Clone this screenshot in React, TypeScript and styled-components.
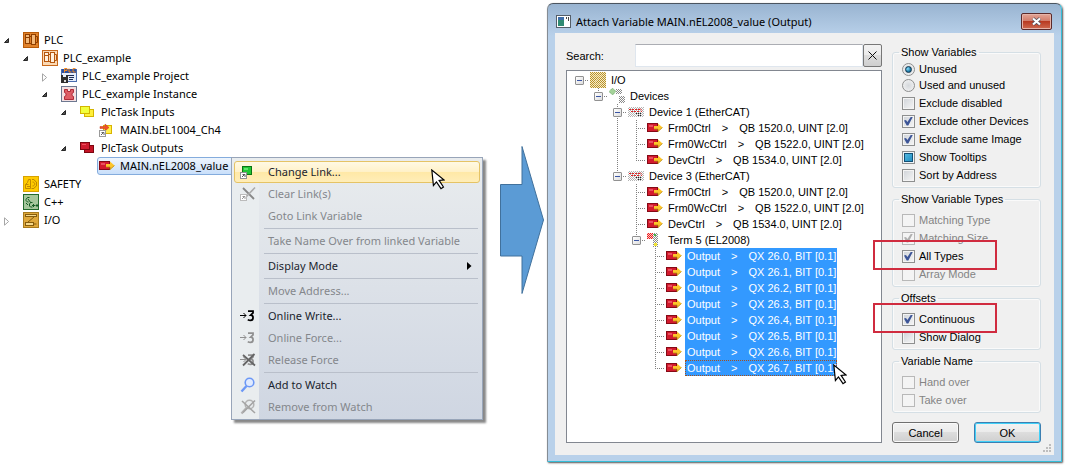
import React from "react";
import styled, { createGlobalStyle, css } from "styled-components";

const GlobalStyle = createGlobalStyle`
  *, *::before, *::after { box-sizing: border-box; }
  body { margin: 0; background: #fff; }
  button, input { font: inherit; color: inherit; margin: 0; }
  button { cursor: default; }
`;

const uiFont = `11px/18px "Noto Sans", "Open Sans", sans-serif`;
const dialogFont = `11px/16px "Liberation Sans", Arial, sans-serif`;

/* ---------- page ---------- */

const Page = styled.main`
  display: grid;
  grid-template-columns: 484px 63px minmax(420px, 1fr);
  padding: 3px 3px 3px 0;
  font: ${uiFont};
  color: #000;
`;

const Explorer = styled.section`
  position: relative;
  padding: 28px 0 0 3px;
`;

/* ---------- solution tree ---------- */

const TreeRow = styled.div<{ $level: number }>`
  display: flex;
  align-items: center;
  height: 18px;
  padding-left: ${(p) => p.$level * 19}px;
`;

const Twisty = styled.button`
  display: flex;
  width: 20px;
  height: 18px;
  padding: 6px 0 0;
  border: 0;
  background: none;
  flex: none;
`;

const NodeIcon = styled.span`
  display: flex;
  flex: none;
`;

const NodeLabel = styled.span`
  padding-left: 5px;
  white-space: nowrap;
`;

const SelectedNode = styled.span`
  display: flex;
  align-items: center;
  width: 137px;
  height: 18px;
  margin-left: -2px;
  padding-left: 1px;
  border: 1px solid #84acdd;
  border-radius: 3px;
  background: linear-gradient(#eef5fd, #c9dffa);
`;

const NodeContent = styled.span`
  display: flex;
  align-items: center;
`;

function OpenArrow() {
  return (
    <svg width="8" height="8" viewBox="0 0 8 8">
      <path d="M5.500 1.500v4H1.500z" fill="#505050" stroke="#262626" strokeWidth="1" />
    </svg>
  );
}

function ClosedArrow() {
  return (
    <svg width="8" height="9" viewBox="0 0 8 9">
      <path d="M1.500 .8v7.400L5.600 4.500z" fill="#fff" stroke="#a6a6a6" />
    </svg>
  );
}

function PlcIcon({ light }: { light?: boolean }) {
  const s = light ? "#b4560f" : "#8f3e00";
  return (
    <svg width="16" height="16" viewBox="0 0 16 16">
      <rect x=".5" y=".5" width="15" height="15" fill={light ? "#fbd9b4" : "#e0822b"} stroke={light ? "#c8691c" : "#b85a08"} />
      <g fill={light ? "#fff1df" : "#f3b878"} stroke={s}>
        <rect x="2.500" y="2.500" width="4" height="3" />
        <rect x="2.500" y="5.500" width="4" height="6" />
        <rect x="8.500" y="2.500" width="4" height="10" />
        <path d="M6.500 4.500h2M12.500 4.500h2v6h-2M8.500 11.500h-2" fill="none" />
      </g>
    </svg>
  );
}

function ProjectIcon() {
  return (
    <svg width="16" height="16" viewBox="0 0 16 16">
      <rect x=".5" y="1.500" width="15" height="12" fill="#e6eefb" stroke="#4a6cae" />
      <rect x="1" y="1" width="14" height="4" fill="#2b50a0" />
      <path d="M3.500 4.500V.500h2.500v2H3.500M8 .500v3.500h2.500M14.500 .600h-2.500v3.400h2.500" fill="none" stroke="#f58a20" />
      <path d="M7 7.500h6M8 9.500h5M8 11.500h4" stroke="#1d2c55" />
      <path d="M0 7h2v2h3V7h2v8H0z" fill="#2e2e2e" />
      <path d="M3 12h2v2H3z" fill="#d8d8d8" />
    </svg>
  );
}

function InstanceIcon() {
  return (
    <svg width="16" height="16" viewBox="0 0 16 16">
      <rect x=".5" y=".5" width="15" height="15" fill="#f3dfe1" stroke="#6d7890" />
      <path d="M3.500 3.500h3v2h3v-2h3v3l-1.500 1v2l1.500 1v3h-9v-3l1.500-1v-2l-1.500-1z" fill="#de5d66" stroke="#b02a38" />
    </svg>
  );
}

function FoldersIcon({ red }: { red?: boolean }) {
  const stroke = red ? "#7c0711" : "#d3b500";
  return (
    <svg width="16" height="16" viewBox="0 0 16 16">
      <rect x="4.500" y="5.500" width="9" height="7" fill={red ? "#c41325" : "#ffef3a"} stroke={stroke} />
      <rect x=".5" y="2.500" width="9" height="7" fill={red ? "#cf1c2f" : "#f1ff3c"} stroke={stroke} />
      {red && <path d="M2 4h4v1H2z" fill="#ee5260" />}
    </svg>
  );
}

function LinkedInputIcon() {
  return (
    <svg width="16" height="16" viewBox="0 0 16 16">
      <rect x="4.500" y="3.500" width="8" height="8" fill="#ffef4a" stroke="#d9b400" />
      <path d="M1 4.500h5V2l4 3.500L6 9V6.500H1z" fill="#f0502a" stroke="#c23a18" strokeWidth=".5" />
      <rect x=".5" y="8.500" width="6" height="6" fill="#fff" stroke="#999" />
      <path d="M2 13l3-3M2.500 10.500H5V13" fill="none" stroke="#666" />
    </svg>
  );
}

function OutputIcon() {
  return (
    <svg width="16" height="16" viewBox="0 0 16 16">
      <rect x=".5" y="3.500" width="10" height="8" fill="#d31a2d" stroke="#860a16" />
      <path d="M2 5h4v2H2z" fill="#e9505f" />
      <path d="M7 6h4V3.500l4.500 4L11 11.500V9H7z" fill="#fdc52b" />
      <path d="M7 9h4v2.500l4.500-4" fill="none" stroke="#b98a10" strokeWidth=".8" />
    </svg>
  );
}

function SafetyIcon() {
  return (
    <svg width="16" height="16" viewBox="0 0 16 16">
      <rect x=".5" y=".5" width="15" height="15" fill="#ffcb00" stroke="#d7a200" />
      <g fill="none" stroke="#c08a00">
        <path d="M7.500 3.500h-2l-1 3-2 2v4h5zM2.500 8.500h3M4 10.500h3" />
        <path d="M9 3.500h2l1 1.500 1.500 1v4L12 11l-1 1.500H8.500M9.500 6c3 0 3 4 0 4" />
      </g>
    </svg>
  );
}

function CppIcon() {
  return (
    <svg width="16" height="16" viewBox="0 0 16 16">
      <rect x=".5" y=".5" width="15" height="15" fill="#a5c79c" stroke="#226a2c" />
      <path
        d="M6.500 3.500h-2l-1.500 2v1l1.500 1.500h1M5 5l3 4M9.500 8.500h-2L6.500 10v2l1 1h2M9 11.500h3M10.500 10v3M12.500 11.500h3M14 10v3M3 9l2 2"
        fill="none"
        stroke="#155a22"
      />
    </svg>
  );
}

function IoIcon() {
  return (
    <svg width="16" height="16" viewBox="0 0 16 16">
      <rect x=".5" y=".5" width="15" height="15" fill="#dfa83b" stroke="#a87a1d" />
      <g fill="#f7d98b" stroke="#855c0c">
        <rect x="2.500" y="2.500" width="11" height="2" />
        <rect x="2.500" y="10.500" width="8" height="3" />
        <path d="M11 5L5 10M10.500 12h3" fill="none" />
      </g>
    </svg>
  );
}

type Node = { level: number; label: string; icon: React.ReactNode; state?: "open" | "closed"; selected?: boolean };

const nodes: Node[] = [
  { level: 0, label: "PLC", icon: <PlcIcon />, state: "open" },
  { level: 1, label: "PLC_example", icon: <PlcIcon light />, state: "open" },
  { level: 2, label: "PLC_example Project", icon: <ProjectIcon />, state: "closed" },
  { level: 2, label: "PLC_example Instance", icon: <InstanceIcon />, state: "open" },
  { level: 3, label: "PlcTask Inputs", icon: <FoldersIcon />, state: "open" },
  { level: 4, label: "MAIN.bEL1004_Ch4", icon: <LinkedInputIcon /> },
  { level: 3, label: "PlcTask Outputs", icon: <FoldersIcon red />, state: "open" },
  { level: 4, label: "MAIN.nEL2008_value", icon: <OutputIcon />, selected: true },
  { level: 0, label: "SAFETY", icon: <SafetyIcon /> },
  { level: 0, label: "C++", icon: <CppIcon /> },
  { level: 0, label: "I/O", icon: <IoIcon />, state: "closed" },
];

function SolutionTree() {
  return (
    <div role="tree" aria-label="Solution">
      {nodes.map((n) => {
        const Content = n.selected ? SelectedNode : NodeContent;
        return (
          <TreeRow key={n.label} $level={n.level} role="treeitem" aria-level={n.level + 1} aria-selected={!!n.selected}>
            <Twisty tabIndex={n.state ? 0 : -1} aria-label={`Toggle ${n.label}`}>
              {n.state === "open" && <OpenArrow />}
              {n.state === "closed" && <ClosedArrow />}
            </Twisty>
            <Content>
              <NodeIcon>{n.icon}</NodeIcon>
              <NodeLabel>{n.label}</NodeLabel>
            </Content>
          </TreeRow>
        );
      })}
    </div>
  );
}

/* ---------- context menu ---------- */

const Menu = styled.div`
  position: absolute;
  top: 154px;
  left: 231px;
  width: 252px;
  padding: 3px 3px 1px 0;
  border: 1px solid #98a5b9;
  background: linear-gradient(90deg, #e9edef 27px, transparent 27px), linear-gradient(#e9ecee, #cfd6e2);
  box-shadow: 3px 3px 2px #888;
`;

const MenuItem = styled.button<{ $hot?: boolean }>`
  display: grid;
  grid-template-columns: 33px 1fr 12px;
  align-items: center;
  width: 246px;
  height: 22px;
  margin-left: 2px;
  padding: 0;
  border: 1px solid transparent;
  border-radius: 3px;
  background: none;
  text-align: left;
  color: #1b1f2e;
  white-space: nowrap;

  &:disabled { color: #84878c; }

  ${(p) =>
    p.$hot &&
    css`
      border-color: #e5c365;
      background: linear-gradient(#fff9e4, #fff1c8 48%, #ffe8a6 50%, #ffedb8);
    `}
`;

const MenuIcon = styled.span`
  display: flex;
  padding-left: 5px;
`;

const Separator = styled.hr`
  height: 1px;
  margin: 1px 1px 1px 32px;
  border: 0;
  background: #b9bfca;
`;

function ChangeLinkIcon() {
  return (
    <svg width="16" height="16" viewBox="0 0 16 16">
      <rect x="2.500" y="2.500" width="9" height="8" fill="#22c535" stroke="#0a7414" />
      <path d="M4 4h4v2H4z" fill="#62e36c" />
      <rect x=".5" y="8.500" width="6" height="6" fill="#fff" stroke="#909090" />
      <path d="M2 13l3-3M2.500 10.500H5V13" fill="none" stroke="#555" />
    </svg>
  );
}

function ClearLinkIcon() {
  return (
    <svg width="16" height="16" viewBox="0 0 16 16">
      <path d="M3 2l11 11" stroke="#888" strokeWidth="1.800" />
      <path d="M15 1.500L6 11" stroke="#aaa" strokeWidth="1.600" />
      <rect x=".5" y="8.500" width="6" height="6" fill="#fff" stroke="#bbb" />
      <path d="M2 13l3-3M2.500 10.500H5V13" fill="none" stroke="#999" />
    </svg>
  );
}

function WriteIcon({ color, crossed }: { color: string; crossed?: boolean }) {
  return (
    <svg width="16" height="16" viewBox="0 0 16 16">
      <path d="M0 7.500h6M3.500 5L6 7.500 3.500 10" fill="none" stroke={color} />
      <path d="M8 3.200h5v1.600L10.800 7c3 0 3 5.400-.2 5.400-1.200 0-2-.2-2.800-.8" fill="none" stroke={color} strokeWidth="1.800" />
      {crossed && <path d="M3 3l12 10.500M14.500 2L3 13.500" stroke="#666" strokeWidth="1.800" />}
    </svg>
  );
}

function WatchIcon({ crossed }: { crossed?: boolean }) {
  const c = crossed ? "#b3b3b3" : "#6c98f6";
  return (
    <svg width="16" height="16" viewBox="0 0 16 16">
      <circle cx="9.500" cy="5.500" r="4.300" fill={crossed ? "none" : "#e0ebff"} stroke={c} strokeWidth="1.600" />
      <path d="M6.500 9L1.500 14.500" stroke={c} strokeWidth="2.400" />
      {crossed && <path d="M2 2l13 12M15 1.500L3 13.500" stroke="#a4a4a4" strokeWidth="1.600" />}
    </svg>
  );
}

function SubmenuArrow() {
  return (
    <svg width="5" height="8" viewBox="0 0 5 8">
      <path d="M0 0l4.500 4L0 8z" fill="#000" />
    </svg>
  );
}

type Entry = { label: string; icon?: React.ReactNode; off?: boolean; hot?: boolean; sub?: boolean } | null;

const entries: Entry[] = [
  { label: "Change Link...", icon: <ChangeLinkIcon />, hot: true },
  { label: "Clear Link(s)", icon: <ClearLinkIcon />, off: true },
  { label: "Goto Link Variable", off: true },
  null,
  { label: "Take Name Over from linked Variable", off: true },
  null,
  { label: "Display Mode", sub: true },
  null,
  { label: "Move Address...", off: true },
  null,
  { label: "Online Write...", icon: <WriteIcon color="#000" /> },
  { label: "Online Force...", icon: <WriteIcon color="#909090" />, off: true },
  { label: "Release Force", icon: <WriteIcon color="#909090" crossed />, off: true },
  null,
  { label: "Add to Watch", icon: <WatchIcon /> },
  { label: "Remove from Watch", icon: <WatchIcon crossed />, off: true },
];

const PointerSpot = styled.span<{ $x: number; $y: number }>`
  position: absolute;
  left: ${(p) => p.$x}px;
  top: ${(p) => p.$y}px;
  display: flex;
  z-index: 2;
`;

function Pointer({ x, y }: { x: number; y: number }) {
  return (
    <PointerSpot $x={x} $y={y}>
      <svg width="14" height="23" viewBox="0 0 14 23">
        <path d="M.8 1v15.500l3.400-3.200 3.800 7.200 2.600-1.400-3.600-7h4.800z" fill="#fff" stroke="#000" strokeWidth="1.200" transform="rotate(-6 1 1)" />
      </svg>
    </PointerSpot>
  );
}

function ContextMenu() {
  return (
    <Menu role="menu">
      {entries.map((e, i) =>
        e === null ? (
          <Separator key={i} />
        ) : (
          <MenuItem key={e.label} role="menuitem" $hot={e.hot} disabled={e.off}>
            <MenuIcon>{e.icon}</MenuIcon>
            <span>{e.label}</span>
            {e.sub && <SubmenuArrow />}
          </MenuItem>
        )
      )}
      <Pointer x={199} y={11} />
    </Menu>
  );
}

/* ---------- arrow between the two steps ---------- */

const StepArrow = styled.div`
  display: flex;
  justify-content: flex-end;
  align-items: flex-start;
  padding: 142px 2px 0 0;
`;

/* ---------- dialog ---------- */

const Dialog = styled.section`
  display: flex;
  flex-direction: column;
  padding: 0 7px 6px;
  border: 1px solid #35bdd8;
  border-top-color: #4b5560;
  border-left-color: #858c94;
  border-radius: 6px 6px 1px 1px;
  background: linear-gradient(#99b4d1, #b9d1ea 32px);
  box-shadow: 1px 1px 2px #555;
`;

const TitleBar = styled.header`
  display: flex;
  align-items: center;
  gap: 5px;
  height: 29px;
  padding: 6px 2px 0 1px;
  white-space: nowrap;
`;

const Title = styled.h1`
  flex: 1;
  margin: 0;
  font: ${uiFont};
`;

const CloseButton = styled.button`
  display: grid;
  place-items: center;
  width: 31px;
  height: 17px;
  padding: 0;
  border: 1px solid #5b2a2a;
  border-radius: 2px;
  background: linear-gradient(#e3a596, #d27c6a 46%, #b83a22 50%, #cf6a50);
  box-shadow: inset 0 0 0 1px #e6b3a8;
`;

const Client = styled.div`
  position: relative;
  display: grid;
  grid-template-columns: minmax(0, 1fr) 149px;
  column-gap: 10px;
  padding: 11px 13px 12px 11px;
  background: #f0f0f0;
  font: ${dialogFont};
`;

const Browser = styled.div`
  display: flex;
  flex-direction: column;
  gap: 3px;
`;

const SearchBar = styled.div`
  display: grid;
  grid-template-columns: 69px 1fr 19px;
  align-items: center;
  height: 23px;
`;

const SearchInput = styled.input`
  width: 100%;
  height: 23px;
  padding: 0 4px;
  border: 1px solid #dfe6ee;
  border-top-color: #abadb3;
  background: #fff;
  outline: none;
`;

const ClearButton = styled.button`
  display: grid;
  place-items: center;
  height: 23px;
  padding: 0;
  border: 1px solid #777;
  border-radius: 2px;
  background: linear-gradient(#f2f2f2, #ebebeb 48%, #dddddd 50%, #cfcfcf);
`;

const ListBox = styled.div`
  flex: 1;
  padding: 1px 4px;
  border: 1px solid #828790;
  background: #fff;
`;

const IoRow = styled.div`
  display: flex;
  align-items: center;
  height: 16px;
  white-space: nowrap;
`;

type GuideKind = " " | "|" | "+" | "L" | "-";

const dotsV = "repeating-linear-gradient(to bottom, #808080 0 1px, transparent 1px 2px)";
const dotsH = "repeating-linear-gradient(to right, #808080 0 1px, transparent 1px 2px)";

const Guide = styled.span<{ $kind: GuideKind }>`
  display: grid;
  align-items: center;
  flex: none;
  width: 19px;
  height: 16px;
  padding-left: 4px;
  background-repeat: no-repeat;
  ${(p) => p.$kind === "|" && css`background-image: ${dotsV}; background-size: 1px 16px; background-position: 8px 0;`}
  ${(p) => p.$kind === "+" && css`background-image: ${dotsV}, ${dotsH}; background-size: 1px 16px, 10px 1px; background-position: 8px 0, 8px 8px;`}
  ${(p) => p.$kind === "L" && css`background-image: ${dotsV}, ${dotsH}; background-size: 1px 8px, 10px 1px; background-position: 8px 0, 8px 8px;`}
  ${(p) => p.$kind === "-" && css`background-image: ${dotsH}; background-size: 10px 1px; background-position: 8px 8px;`}
`;

const Expander = styled.button`
  display: grid;
  place-items: center;
  width: 9px;
  height: 9px;
  padding: 0;
  border: 1px solid #919191;
  border-radius: 1px;
  background: linear-gradient(135deg, #fff, #ddd);

  &::before {
    content: "";
    width: 5px;
    height: 1px;
    background: #3a55a4;
  }
`;

const IoText = styled.span<{ $selected?: boolean; $focus?: boolean }>`
  display: flex;
  gap: 11px;
  height: 16px;
  margin-left: 3px;
  padding: 0 1px 0 2px;
  ${(p) =>
    p.$selected &&
    css`
      color: #fff;
      background: #3399ff;
    `}
  ${(p) => p.$focus && css`outline: 1px dotted #a4511c; outline-offset: -1px;`}
`;

function Hatch({ id, color }: { id: string; color: string }) {
  return (
    <pattern id={id} width="2" height="2" patternUnits="userSpaceOnUse">
      <path d="M0 0h1v1H0zM1 1h1v1H1z" fill={color} />
    </pattern>
  );
}

function HatchedRootIcon() {
  return (
    <svg width="16" height="16" viewBox="0 0 16 16">
      <defs><Hatch id="h-root" color="#b8912a" /></defs>
      <rect width="16" height="16" fill="#f6ecc8" />
      <rect width="16" height="16" fill="url(#h-root)" />
      <path d="M3 4h9M4 12h8M10 6l-5 4" stroke="#f6e7b8" opacity=".6" />
    </svg>
  );
}

function DevicesIcon() {
  return (
    <svg width="16" height="16" viewBox="0 0 16 16">
      <defs><Hatch id="h-dev" color="#8a8a8a" /></defs>
      <path d="M0 3.500L3.500 0 7 3.500 3.500 7z" fill="#a5d39a" stroke="#4b8f46" strokeWidth=".8" strokeDasharray="1 1" />
      <path d="M7 1h6v5H7zM10 8h6v7h-6z" fill="url(#h-dev)" />
    </svg>
  );
}

function DeviceIcon() {
  return (
    <svg width="16" height="16" viewBox="0 0 16 16">
      <defs><Hatch id="h-device" color="#b4b4b4" /></defs>
      <rect y="3" width="16" height="10" fill="url(#h-device)" />
      <path d="M1 5.500h11M12 4.500l2 2-1 1.500M3 7.500h9" fill="none" stroke="#e02020" strokeDasharray="2 1" />
      <path d="M8 9.500h6M10 11.500h3" fill="none" stroke="#222" strokeDasharray="1 1" />
    </svg>
  );
}

function TerminalIcon() {
  return (
    <svg width="16" height="16" viewBox="0 0 16 16">
      <defs><Hatch id="h-red" color="#ee1c1c" /><Hatch id="h-term" color="#8a8a8a" /></defs>
      <path d="M0 1h6v6H0z" fill="#fbc9c9" />
      <path d="M0 1h6v6H0z" fill="url(#h-red)" />
      <path d="M6 1h5v14H6z" fill="url(#h-term)" />
      <path d="M7 2h2v2H7z" fill="#4bb34b" />
      <path d="M7 11h3v3H7z" fill="#f3e638" />
    </svg>
  );
}

type IoNode = {
  guides: string;
  icon: React.ReactNode;
  label: string;
  address?: string;
  open?: boolean;
  selected?: boolean;
  focus?: boolean;
};

const frameVars: [string, string][] = [
  ["Frm0Ctrl", "QB 1520.0, UINT [2.0]"],
  ["Frm0WcCtrl", "QB 1522.0, UINT [2.0]"],
  ["DevCtrl", "QB 1534.0, UINT [2.0]"],
];

const ioNodes: IoNode[] = [
  { guides: "-", icon: <HatchedRootIcon />, label: "I/O", open: true },
  { guides: " L", icon: <DevicesIcon />, label: "Devices", open: true },
  { guides: "  +", icon: <DeviceIcon />, label: "Device 1 (EtherCAT)", open: true },
  ...frameVars.map(([label, address], i) => ({ guides: i === 2 ? "  |L" : "  |+", icon: <OutputIcon />, label, address })),
  { guides: "  L", icon: <DeviceIcon />, label: "Device 3 (EtherCAT)", open: true },
  ...frameVars.map(([label, address]) => ({ guides: "   +", icon: <OutputIcon />, label, address })),
  { guides: "   L", icon: <TerminalIcon />, label: "Term 5 (EL2008)", open: true },
  ...Array.from({ length: 8 }, (_, i) => ({
    guides: i === 7 ? "    L" : "    +",
    icon: <OutputIcon />,
    label: "Output",
    address: `QX 26.${i}, BIT [0.1]`,
    selected: true,
    focus: i === 7,
  })),
];

const FocusedRow = styled(IoRow)`
  position: relative;
`;

function IoTree() {
  return (
    <ListBox role="tree" aria-label="Variables" aria-multiselectable>
      {ioNodes.map((n, i) => {
        const Row = n.focus ? FocusedRow : IoRow;
        return (
          <Row key={i} role="treeitem" aria-level={n.guides.length} aria-selected={!!n.selected}>
            {n.guides.split("").map((g, k) => (
              <Guide key={k} $kind={g as GuideKind}>
                {n.open && k === n.guides.length - 1 && <Expander aria-label={`Collapse ${n.label}`} />}
              </Guide>
            ))}
            <NodeIcon>{n.icon}</NodeIcon>
            <IoText $selected={n.selected} $focus={n.focus}>
              <span>{n.label}</span>
              {n.address && <span>&gt;</span>}
              {n.address && <span>{n.address}</span>}
            </IoText>
            {n.focus && <Pointer x={262} y={4} />}
          </Row>
        );
      })}
    </ListBox>
  );
}

/* ---------- option groups ---------- */

const Side = styled.div`
  display: flex;
  flex-direction: column;
`;

const Group = styled.fieldset<{ $lead: number }>`
  min-width: 0;
  margin: 0 0 3px;
  padding: ${(p) => p.$lead}px 9px 3px;
  border: 1px solid #d5dfe5;
  border-radius: 3px;
  box-shadow: inset 0 0 0 1px #fafafa;
`;

const Legend = styled.legend`
  height: 16px;
  margin-left: -3px;
  padding: 0 2px;
`;

const RadioSet = styled.div`
  padding-bottom: 1px;
`;

const Option = styled.label<{ $off?: boolean; $short?: boolean }>`
  position: relative;
  display: flex;
  align-items: center;
  gap: 4px;
  height: ${(p) => (p.$short ? 16 : 18)}px;
  color: ${(p) => (p.$off ? "#848484" : "#000")};
  white-space: nowrap;
`;

const Check = styled.input`
  appearance: none;
  display: grid;
  place-items: center;
  flex: none;
  width: 13px;
  height: 13px;
  border: 1px solid #8e8f8f;
  background: linear-gradient(135deg, #cfd3d8, #f6f6f6);
  box-shadow: inset 0 0 0 1px #f4f4f4;

  &:checked::after {
    content: "";
    width: 9px;
    height: 9px;
    background: #3d5597;
    clip-path: polygon(0 45%, 22% 38%, 38% 62%, 78% 0, 100% 0, 48% 100%, 30% 100%);
  }

  &:indeterminate {
    background: linear-gradient(135deg, #5fc4ea, #1583b8);
    border-color: #8e8f8f;
    box-shadow: inset 0 0 0 1px #eef4f8, inset 0 0 0 2px #134f74;
  }

  &:disabled {
    border-color: #b8b8b8;
    background: #f4f4f4;
  }

  &:disabled:checked::after { background: #b0b0b0; }
`;

const Radio = styled.input`
  appearance: none;
  display: grid;
  place-items: center;
  flex: none;
  width: 13px;
  height: 13px;
  border: 1px solid #8e8f8f;
  border-radius: 50%;
  background: radial-gradient(#d5d8dc, #f6f6f6);

  &:checked::after {
    content: "";
    width: 7px;
    height: 7px;
    border: 1px solid #12354d;
    border-radius: 50%;
    background: radial-gradient(circle at 35% 35%, #8be0ff, #14709e 65%);
  }
`;

const Marker = styled.span`
  position: absolute;
  top: -7px;
  left: -29px;
  width: 124px;
  height: 30px;
  border: 2px solid #d02b3f;
  pointer-events: none;
  z-index: 1;
`;

type OptionProps = { label: string; checked?: boolean; mixed?: boolean; off?: boolean; marked?: boolean };

function CheckOption({ label, checked, mixed, off, marked }: OptionProps) {
  return (
    <Option $off={off}>
      <Check
        type="checkbox"
        defaultChecked={checked}
        disabled={off}
        ref={(el: HTMLInputElement | null) => {
          if (el && mixed) el.indeterminate = true;
        }}
      />
      {label}
      {marked && <Marker />}
    </Option>
  );
}

const ButtonRow = styled.div`
  display: grid;
  grid-template-columns: 67px 67px;
  justify-content: space-between;
  padding-top: 6px;
`;

const PushButton = styled.button<{ $primary?: boolean }>`
  height: 21px;
  padding: 0;
  border: 1px solid ${(p) => (p.$primary ? "#3c7fb1" : "#707070")};
  border-radius: 3px;
  background: linear-gradient(#f2f2f2, #ebebeb 48%, #dddddd 50%, #cfcfcf);
  box-shadow: inset 0 0 0 1px ${(p) => (p.$primary ? "#40d0f8" : "#fafafa")};
`;

const Grip = styled.span`
  position: absolute;
  right: 2px;
  bottom: 2px;
  display: flex;
`;

function AttachDialog() {
  return (
    <Dialog role="dialog" aria-labelledby="dialog-title">
      <TitleBar>
        <svg width="15" height="13" viewBox="0 0 15 13">
          <rect x=".5" y=".5" width="14" height="12" fill="#fff" stroke="#555e68" />
          <rect x="2" y="2" width="6" height="9" fill="#2f8a72" />
          <path d="M2 2h6v3H2z" fill="#3d6da8" />
          <path d="M10 2h1v2h-1zM12 2h1v4h-1z" fill="#444" />
        </svg>
        <Title id="dialog-title">Attach Variable MAIN.nEL2008_value (Output)</Title>
        <CloseButton aria-label="Close">
          <svg width="11" height="9" viewBox="0 0 11 9">
            <path d="M2 1.500l7 6M9 1.500l-7 6" stroke="#4a4f5c" strokeWidth="3.600" />
            <path d="M2 1.500l7 6M9 1.500l-7 6" stroke="#fff" strokeWidth="2.200" />
          </svg>
        </CloseButton>
      </TitleBar>
      <Client>
        <Browser>
          <SearchBar>
            <label htmlFor="search">Search:</label>
            <SearchInput id="search" type="text" />
            <ClearButton aria-label="Clear search">
              <svg width="9" height="9" viewBox="0 0 9 9">
                <path d="M.5 .5l8 8M8.500 .5l-8 8" stroke="#111" />
              </svg>
            </ClearButton>
          </SearchBar>
          <IoTree />
        </Browser>
        <Side>
          <Group $lead={1}>
            <Legend>Show Variables</Legend>
            <RadioSet>
              <Option $short>
                <Radio type="radio" name="usage" defaultChecked />
                Unused
              </Option>
              <Option $short>
                <Radio type="radio" name="usage" />
                Used and unused
              </Option>
            </RadioSet>
            <CheckOption label="Exclude disabled" />
            <CheckOption label="Exclude other Devices" checked />
            <CheckOption label="Exclude same Image" checked />
            <CheckOption label="Show Tooltips" mixed />
            <CheckOption label="Sort by Address" />
          </Group>
          <Group $lead={4}>
            <Legend>Show Variable Types</Legend>
            <CheckOption label="Matching Type" off />
            <CheckOption label="Matching Size" checked off />
            <CheckOption label="All Types" checked marked />
            <CheckOption label="Array Mode" off />
          </Group>
          <Group $lead={4}>
            <Legend>Offsets</Legend>
            <CheckOption label="Continuous" checked marked />
            <CheckOption label="Show Dialog" />
          </Group>
          <Group $lead={4}>
            <Legend>Variable Name</Legend>
            <CheckOption label="Hand over" off />
            <CheckOption label="Take over" off />
          </Group>
          <ButtonRow>
            <PushButton>Cancel</PushButton>
            <PushButton $primary>OK</PushButton>
          </ButtonRow>
        </Side>
        <Grip>
          <svg width="9" height="9" viewBox="0 0 9 9">
            <path d="M6 0h2v2H6zM3 3h2v2H3zM6 3h2v2H6zM0 6h2v2H0zM3 6h2v2H3zM6 6h2v2H6z" fill="#bdbdbd" />
          </svg>
        </Grip>
      </Client>
    </Dialog>
  );
}

export default function App() {
  return (
    <>
      <GlobalStyle />
      <Page>
        <Explorer>
          <SolutionTree />
          <ContextMenu />
        </Explorer>
        <StepArrow>
          <svg width="46" height="150" viewBox="0 0 46 150">
            <path d="M1.500 39.500H23V1.500L44.500 75 23 148.500v-37.500H1.500z" fill="#5b9bd5" stroke="#41719c" />
          </svg>
        </StepArrow>
        <AttachDialog />
      </Page>
    </>
  );
}
